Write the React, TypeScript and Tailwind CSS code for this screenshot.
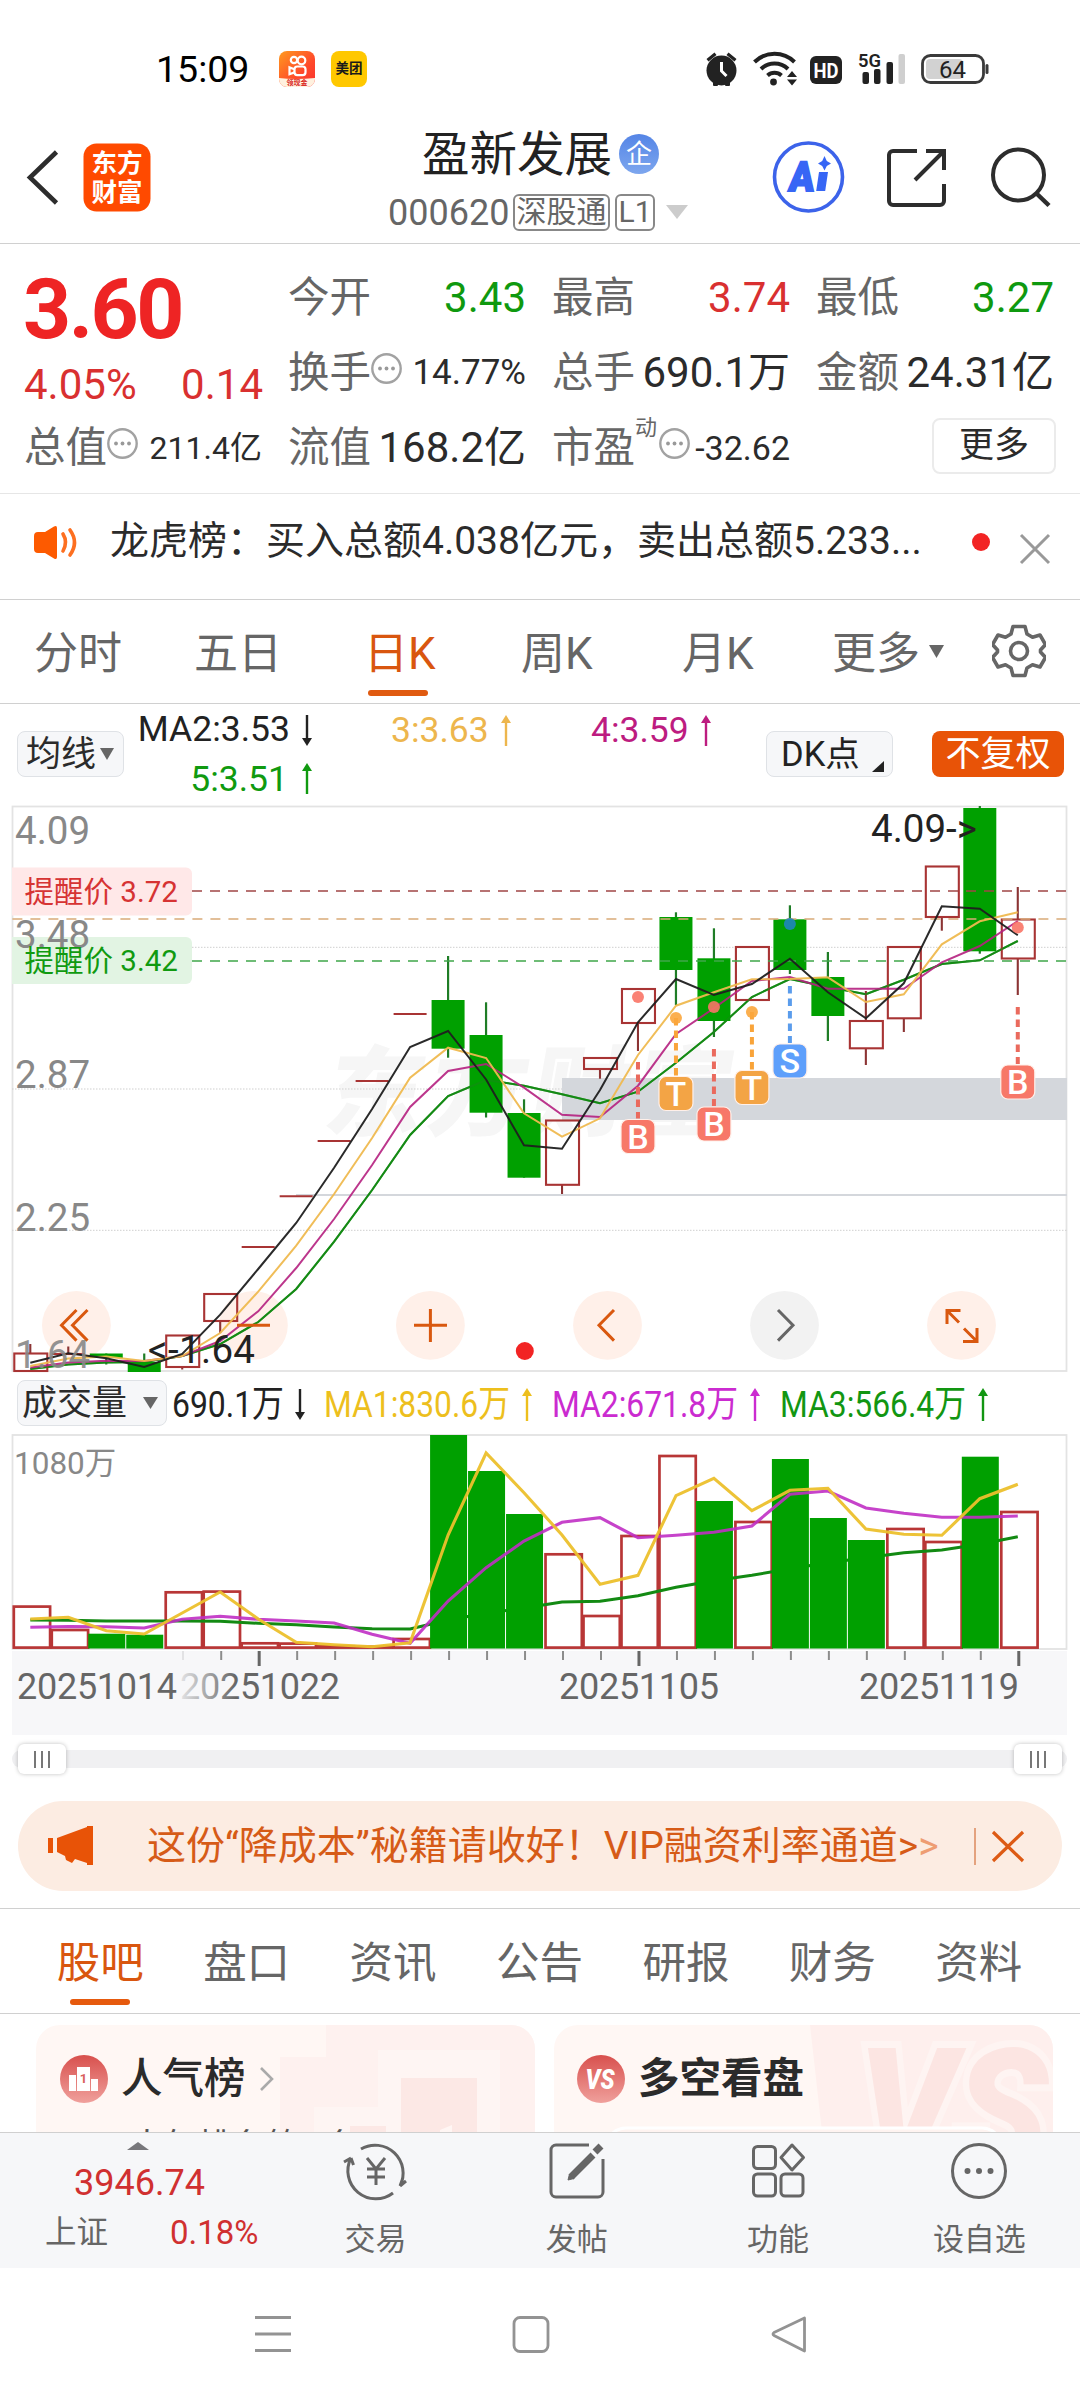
import React from "react";

const RED = "#a83434";
const GREEN = "#00a000";
const X0 = 30.3;
const STEP = 37.98;
const cx = (i: number) => X0 + STEP * i;

type Candle = { up: boolean; t: number; b: number; h?: number; l?: number };

const candles: Candle[] = [
  { up: true, t: 1353.5, b: 1371, h: 1344 },
  { up: true, t: 1354, b: 1354, h: 1346.5 },
  { up: false, t: 1353.5, b: 1358, l: 1364.5 },
  { up: false, t: 1362, b: 1372, h: 1353.5 },
  { up: true, t: 1335.5, b: 1367, l: 1369.5 },
  { up: true, t: 1294, b: 1321, l: 1333 },
  { up: true, t: 1247, b: 1247 },
  { up: true, t: 1196.3, b: 1196.3 },
  { up: true, t: 1141, b: 1141 },
  { up: true, t: 1081, b: 1081 },
  { up: true, t: 1014, b: 1014 },
  { up: false, t: 1000, b: 1048.7, h: 956, l: 1057.7 },
  { up: false, t: 1035, b: 1112.7, h: 1002.3, l: 1117.5 },
  { up: false, t: 1113, b: 1177.7, h: 1099.3 },
  { up: true, t: 1120.5, b: 1184.8, l: 1194 },
  { up: true, t: 1058, b: 1069, l: 1078.7 },
  { up: true, t: 989, b: 1023, l: 1051 },
  { up: false, t: 917, b: 970, h: 912.3, l: 1005 },
  { up: false, t: 958.3, b: 1021, h: 928.3, l: 1037 },
  { up: true, t: 947, b: 1000, },
  { up: false, t: 919.3, b: 970, h: 905.3, l: 974 },
  { up: false, t: 977, b: 1016, h: 952, l: 1041 },
  { up: true, t: 1021, b: 1048.3, h: 991, l: 1065 },
  { up: true, t: 947, b: 1018.3, l: 1032 },
  { up: true, t: 866.5, b: 917, l: 930.7 },
  { up: false, t: 808, b: 951.3, h: 806, l: 953.7 },
  { up: true, t: 919.5, b: 958.5, h: 887, l: 995 },
];

const maBlack = [1362.7, 1353.3, 1358.3, 1367, 1354, 1314.7, 1269, 1223, 1167.7, 1109, 1047, 1031, 1079.5, 1145.3, 1148.7, 1090, 1022.3, 979, 995, 984, 958.7, 992.3, 1018.3, 983.3, 906.3, 908.7, 935.3];
const maYellow = [1366, 1358.5, 1356.5, 1361, 1356, 1333, 1291.7, 1245.7, 1194, 1138, 1077.7, 1047.7, 1058, 1113.3, 1136.7, 1118.3, 1055, 1005.7, 992.3, 979.3, 979, 977.3, 1002, 994.3, 944.3, 921.3, 912.3];
const maPink = [1367.5, 1362.5, 1360.7, 1361, 1356, 1341, 1311.3, 1268, 1219, 1165, 1107, 1071, 1064, 1087.7, 1114.7, 1117, 1085.7, 1034, 1008.3, 981, 977, 988.7, 988.7, 988.7, 962.3, 946, 921];
const maGreen = [1369, 1364.5, 1362.5, 1362, 1356, 1344, 1322, 1289, 1241.7, 1190, 1135, 1096, 1080, 1085.7, 1094.3, 1103.3, 1091.7, 1062.7, 1032, 997, 979, 987, 994.3, 979.7, 964, 960.3, 941];

const vols: [boolean, number][] = [
  [true, 1605.3], [true, 1628.7], [false, 1633.7], [false, 1634.7], [true, 1591], [true, 1590.3], [true, 1642],
  [true, 1642.3], [true, 1645], [true, 1645.4], [true, 1637.7], [false, 1435], [false, 1471], [false, 1514],
  [true, 1553], [true, 1614.7], [true, 1534.7], [true, 1454.7], [false, 1501], [true, 1520.7], [false, 1459],
  [false, 1518], [false, 1540], [true, 1527.7], [true, 1540.7], [false, 1456.7], [true, 1510.7],
];
const vYellow = [1619, 1617.3, 1630.7, 1634, 1613, 1592, 1619, 1642.3, 1644.7, 1646.7, 1642.7, 1535, 1453, 1492.7, 1535, 1584.3, 1575.3, 1495.7, 1478.3, 1510.7, 1490.3, 1488.3, 1529, 1534.3, 1535.3, 1498.7, 1484.3];
const vPink = [1627.3, 1626.5, 1626.7, 1628, 1619.3, 1616.3, 1619.3, 1621, 1623, 1634.3, 1643.3, 1601, 1567.7, 1541, 1522.3, 1517.7, 1537.7, 1535.3, 1532.3, 1526, 1494.3, 1491, 1508, 1513.3, 1517.3, 1517.3, 1516];
const vGreen = [1620, 1620.3, 1621, 1621, 1621, 1621.3, 1623.3, 1624.7, 1627, 1628.7, 1629, 1620, 1613.3, 1608, 1602, 1601.3, 1595.7, 1587.3, 1580.7, 1575.3, 1568.7, 1562.7, 1557.7, 1552.7, 1550, 1544.3, 1536.7];

const pts = (a: number[]) => a.map((y, i) => `${cx(i).toFixed(1)},${y}`).join(" ");

type Marker = { i: number; k: "B" | "T" | "S"; y: number; dot: number; from: number };
const markers: Marker[] = [
  { i: 16, k: "B", y: 1136.5, dot: 997, from: 1062 },
  { i: 17, k: "T", y: 1093.5, dot: 1018, from: 1018 },
  { i: 18, k: "B", y: 1124, dot: 1007, from: 1049 },
  { i: 19, k: "T", y: 1087.5, dot: 1012, from: 1012 },
  { i: 20, k: "S", y: 1061, dot: 924, from: 986 },
  { i: 26, k: "B", y: 1082, dot: 927.5, from: 1007 },
];
const markerColor = { B: "#f77868", T: "#f3a445", S: "#5e9ffb" };
const lineColor = { B: "#ea6a5d", T: "#f9a43a", S: "#5a9cec" };
const dotColor = { B: "#f97466", T: "#fba63c", S: "#1f85bd" };

function Arrow({ color, down = false }: { color: string; down?: boolean }) {
  return (
    <svg width="14" height="32" viewBox="0 0 14 32" className={down ? "rotate-180 shrink-0" : "shrink-0"}>
      <path d="M7 31V4" stroke={color} strokeWidth="2.4" />
      <path d="M7 0l5 8H2z" fill={color} />
    </svg>
  );
}

function More() {
  return (
    <svg width="31" height="31" viewBox="0 0 31 31" className="mb-[8px] shrink-0">
      <circle cx="15.5" cy="15.5" r="14.2" fill="none" stroke="#a2a2a2" strokeWidth="2.4" />
      <circle cx="9" cy="15.5" r="1.9" fill="#999" />
      <circle cx="15.5" cy="15.5" r="1.9" fill="#999" />
      <circle cx="22" cy="15.5" r="1.9" fill="#999" />
    </svg>
  );
}

function StatusBar() {
  return (
    <div className="flex h-[118px] items-center pt-5 pl-[156px] pr-[91px]">
      <span className="w-[123px] pt-[2px] text-[37.500px] leading-none text-black">15:09</span>
      <div className="flex flex-1 gap-4">
        <svg width="36" height="36" viewBox="0 0 36 36">
          <defs>
            <linearGradient id="ks" x1="0" y1="0" x2="1" y2="1">
              <stop offset="0" stopColor="#ff9a1f" />
              <stop offset="0.6" stopColor="#ff4a2a" />
              <stop offset="1" stopColor="#f9302e" />
            </linearGradient>
          </defs>
          <rect width="36" height="36" rx="8" fill="url(#ks)" />
          <path d="M0 27q16 2 36 0v1a8 8 0 0 1-8 8H8a8 8 0 0 1-8-8z" fill="#fff1df" />
          <g fill="none" stroke="#fff" strokeWidth="2.2">
            <circle cx="15" cy="9" r="3.2" />
            <circle cx="22.5" cy="9.5" r="3.8" />
            <rect x="15.5" y="15.5" width="11" height="8.6" rx="2.8" />
            <path d="M15.5 18.2l-5-1.8v6.8l5-1.8" />
          </g>
          <text x="18" y="34" fontSize="7" fontWeight="700" textAnchor="middle" fill="#d9261c">领现金</text>
        </svg>
        <div className="flex size-9 items-center justify-center rounded-lg bg-[#ffc800] text-[13.5px] leading-none font-bold text-[#1a1a1a]">美团</div>
      </div>
      <svg width="283" height="40" viewBox="706 49 283 40" className="shrink-0">
        <g fill="#222">
          <circle cx="721.5" cy="70.5" r="15" />
          <path d="M706.5 59l8-6.5 2 2.4-8 6.5zM736.5 59l-8-6.5-2 2.4 8 6.5z" />
          <rect x="713" y="82" width="5" height="4" rx="1" />
          <rect x="725" y="82" width="5" height="4" rx="1" />
        </g>
        <path d="M721.5 62v9l5 5" fill="none" stroke="#fff" strokeWidth="3" />
        <g fill="none" stroke="#222" strokeWidth="4">
          <path d="M754.5 62a28.5 28.5 0 0 1 40 0" />
          <path d="M761 69a19.5 19.5 0 0 1 27 0" />
          <path d="M767.500 75.500a10.500 10.500 0 0 1 14 0" />
        </g>
        <circle cx="773.5" cy="82" r="3.4" fill="#222" />
        <path d="M787 77l5-6 5 6zM787 79.500l5 6 5-6z" fill="#222" />
        <rect x="810" y="56" width="32" height="28" rx="6" fill="#222" />
        <text x="826" y="77.500" fontSize="21" fontWeight="700" textAnchor="middle" fill="#fff" textLength="25" lengthAdjust="spacingAndGlyphs">HD</text>
        <text x="858" y="66.500" fontSize="19" fontWeight="600" fill="#222" textLength="23" lengthAdjust="spacingAndGlyphs">5G</text>
        <g fill="#222">
          <rect x="862.500" y="72" width="6.500" height="12" rx="2" />
          <rect x="874" y="69" width="6.500" height="15" rx="2" />
          <rect x="886.500" y="62" width="6.500" height="22" rx="2" />
        </g>
        <rect x="898.500" y="54" width="6.500" height="30" rx="2" fill="#cfcfcf" />
        <rect x="922.500" y="55.500" width="61" height="27" rx="8" fill="#fff" stroke="#3a3a3a" strokeWidth="2.800" />
        <rect x="926" y="59" width="37" height="20" rx="4" fill="#d2d2d2" />
        <rect x="985.500" y="64" width="3" height="10" rx="1.500" fill="#3a3a3a" />
        <text x="952.500" y="77.500" fontSize="24" textAnchor="middle" fill="#222">64</text>
      </svg>
    </div>
  );
}

function Header() {
  return (
    <div className="flex h-[126px] border-b border-[#d0d0d0]">
      <svg width="384" height="124" viewBox="0 118 384 124" className="shrink-0">
        <path d="M56.500 152L30 177.500l26.500 25.500" fill="none" stroke="#2d2d2d" strokeWidth="4.600" />
        <rect x="83.500" y="143.500" width="67" height="68" rx="13" fill="#ff4a00" />
        <text x="117" y="172" fontSize="25.500" fontWeight="700" textAnchor="middle" fill="#fff">东方</text>
        <text x="117" y="201" fontSize="25.500" fontWeight="700" textAnchor="middle" fill="#fff">财富</text>
      </svg>
      <div className="flex w-[312px] shrink-0 flex-col pl-[4px] pt-[14px]">
        <div className="flex h-[48px] items-center pl-[34px]">
          <span className="w-[197px] text-[47.500px] leading-none text-[#222]">盈新发展</span>
          <span className="-mt-[4px] flex size-[40px] items-center justify-center rounded-full bg-gradient-to-b from-[#5585e6] to-[#7da6ee] text-[26px] leading-none text-white">企</span>
        </div>
        <div className="mt-[13px] flex items-center text-[#666]">
          <span className="w-[125px] pt-[2px] text-[36px] leading-none">000620</span>
          <span className="flex h-[37px] w-[97px] items-center justify-center rounded-md border-2 border-[#888] text-[30px] leading-none">深股通</span>
          <span className="ml-[5px] flex h-[37px] w-[40px] items-center justify-center rounded-md border-2 border-[#888] text-[30px] leading-none">L1</span>
          <svg width="22" height="14" viewBox="0 0 22 14" className="ml-[11px]"><path d="M0 0h22L11 14z" fill="#ccc" /></svg>
        </div>
      </div>
      <svg width="384" height="124" viewBox="696 118 384 124" className="shrink-0">
        <circle cx="808.500" cy="177" r="34" fill="none" stroke="#3c63ea" strokeWidth="3.600" />
        <text x="0" y="0" fontSize="41" fontWeight="900" fill="#3766f5" stroke="#3766f5" strokeWidth="2" textLength="25" lengthAdjust="spacingAndGlyphs" transform="translate(788 191) skewX(-6)">A</text>
        <path d="M819 172h9l-2.800 19h-9z" fill="#3766f5" />
        <path d="M824.500 156l2.300 5 4.200 2.600-4.200 2.400-2.300 4.500-2.300-4.500-4.200-2.400 4.200-2.600z" fill="#3766f5" />
        <g fill="none" stroke="#2d2d2d" strokeWidth="4">
          <path d="M917 151h-24a4 4 0 0 0-4 4v46a4 4 0 0 0 4 4h47a4 4 0 0 0 4-4v-17" />
          <path d="M926 151h18v19M944 151l-29 29" />
          <circle cx="1018.500" cy="175" r="25.500" />
          <path d="M1036 193l13 12.500" strokeWidth="4.500" />
        </g>
      </svg>
    </div>
  );
}

function Stat({ label, value, tone = "text-[#2b2b2b]", size = "text-[42px]", more = false }: { label: React.ReactNode; value: string; tone?: string; size?: string; more?: boolean }) {
  return (
    <div className="flex h-[75px] w-[238px] items-center justify-between leading-none whitespace-nowrap">
      <span className="flex items-center text-[41.500px] text-[#666]">{label}{more && <More />}</span>
      <span className={`${size} ${tone}`}>{value}</span>
    </div>
  );
}

function Quote() {
  return (
    <div className="flex h-[250px] gap-[26px] border-b border-[#e6e6e6] pl-[25px]">
      <div className="-ml-[1px] flex w-[239px] flex-col">
        <div className="-ml-[1px] flex h-[114px] items-end pb-[6px] text-[84px] leading-none font-bold tracking-[-2.5px] text-[#ee2424]">3.60</div>
        <div className="flex h-[54px] items-center justify-between text-[42px] leading-none text-[#d93030]"><span>4.05%</span><span>0.14</span></div>
        <div className="-mt-[2px]"><Stat label="总值" more value="211.4亿" size="text-[32px]" /></div>
      </div>
      <div className="-ml-[1px] grid h-[239px] grid-cols-3 content-start gap-x-[26px] pt-[16px]">
        <Stat label="今开" value="3.43" tone="text-[#0f990f]" />
        <Stat label="最高" value="3.74" tone="text-[#d93030]" />
        <Stat label="最低" value="3.27" tone="text-[#0f990f]" />
        <Stat label="换手" more value="14.77%" size="text-[35px]" />
        <Stat label="总手" value="690.1万" />
        <Stat label="金额" value="24.31亿" />
        <Stat label="流值" value="168.2亿" />
        <Stat label={<>市盈<span className="-mt-[40px] mr-[2px] text-[22px]">动</span></>} more value="-32.62" size="text-[34px]" />
        <div className="flex h-[75px] items-center justify-end">
          <span className="-mr-[2px] -mt-[4px] flex h-[56px] w-[124px] items-center justify-center rounded-lg border-2 border-[#ebebeb] text-[35px] leading-none text-[#2b2b2b]">更多</span>
        </div>
      </div>
    </div>
  );
}

function News() {
  return (
    <div className="flex h-[106px] items-center border-b border-[#d0d0d0] pb-[10px]">
      <svg width="110" height="50" viewBox="0 515 110 50" className="shrink-0">
        <path d="M34 534a4 4 0 0 1 4-4h7l9-5.500q3-1.500 3 1.500v29q0 3-3 1.500l-9-5.500h-7a4 4 0 0 1-4-4z" fill="#fd5a00" />
        <path d="M63 532q5 8 0 17M70 528q9 12.500 0 25" fill="none" stroke="#fd6f20" strokeWidth="3.600" strokeLinecap="round" />
      </svg>
      <span className="flex-1 text-[39px] leading-none whitespace-nowrap text-[#2b2b2b]">龙虎榜：买入总额4.038亿元，卖出总额5.233...</span>
      <span className="size-[18px] rounded-full bg-[#f22424]" />
      <svg width="90" height="50" viewBox="990 515 90 50" className="shrink-0">
        <path d="M1021 533l28 28M1049 533l-28 28" stroke="#999" strokeWidth="3" />
      </svg>
    </div>
  );
}

function PeriodTabs() {
  return (
    <div className="flex h-[104px] border-b border-[#d0d0d0] pl-[34px] text-[44px] leading-none whitespace-nowrap text-[#666]">
      <span className="w-[160px] pt-[32px]">分时</span>
      <span className="w-[170px] pt-[32px]">五日</span>
      <span className="flex w-[157px] flex-col pt-[32px] text-[#d9560f]">
        日K
        <span className="mt-[14px] ml-[4px] h-[6px] w-[60px] rounded-full bg-[#e05a10]" />
      </span>
      <span className="w-[161px] pt-[32px]">周K</span>
      <span className="w-[150px] pt-[32px]">月K</span>
      <span className="flex w-[160px] pt-[32px]">更多<svg width="15" height="13" viewBox="0 0 15 13" className="mt-[13px] ml-[9px]"><path d="M0 0h15L7.500 13z" fill="#666" /></svg></span>
      <svg width="54" height="54" viewBox="-27 -27 54 54" className="mt-[24px]">
        <path d="M-6 -24.500h12l2 7.500 5.500 3.200 7.500-2.200 5.500 9.500-5 5.500v2l5 5.500-5.500 9.500-7.500-2.200-5.500 3.200-2 7.500h-12l-2-7.500-5.500-3.200-7.500 2.200-5.500-9.500 5-5.500v-2l-5-5.500 5.500-9.500 7.500 2.200 5.500-3.200z" fill="none" stroke="#666" strokeWidth="3.600" strokeLinejoin="round" />
        <circle r="8.500" fill="none" stroke="#666" strokeWidth="3.600" />
      </svg>
    </div>
  );
}

function MaLegend() {
  return (
    <div className="flex h-[96px] items-center pl-[17px] text-[35.500px] leading-none whitespace-nowrap">
      <div className="mt-[4px] flex h-[46px] w-[107px] items-center gap-[4px] rounded-lg border border-[#dfe2e6] bg-[#f6f7f9] pl-[8px] text-[35px] text-[#2b2b2b]">
        均线
        <svg width="14" height="12" viewBox="0 0 14 12"><path d="M0 0h14L7 12z" fill="#666" /></svg>
      </div>
      <div className="mt-[5px] ml-[12px] flex w-[178px] flex-col gap-[14px]">
        <div className="flex items-center justify-end gap-[10px] text-[#222]">MA2:3.53<Arrow color="#222" down /></div>
        <div className="flex items-center justify-end gap-[12px] text-[#109a10]">5:3.51<Arrow color="#109a10" /></div>
      </div>
      <div className="mb-[43px] ml-[77px] flex w-[122px] items-center justify-between text-[#edb64d]">3:3.63<Arrow color="#edb64d" /></div>
      <div className="mb-[43px] ml-[78px] flex w-[122px] items-center justify-between text-[#bd1c80]">4:3.59<Arrow color="#bd1c80" /></div>
      <div className="mt-[4px] ml-[53px] flex h-[46px] w-[127px] items-center rounded-lg border border-[#dfe2e6] bg-[#f6f7f9] pl-[14px] text-[34.500px] text-[#222]">
        DK点
        <svg width="12" height="11" viewBox="0 0 12 11" className="mt-[24px] ml-[12px]"><path d="M12 0v11H0z" fill="#222" /></svg>
      </div>
      <div className="mt-[4px] ml-[39px] flex h-[46px] w-[132px] items-center justify-center rounded-lg bg-[#e85307] text-[35px] text-white">不复权</div>
    </div>
  );
}

function PriceChart() {
  const rest = candles.map((c, i) => ({ c, i }));
  return (
    <svg width="1080" height="576" viewBox="0 800 1080 576" className="block">
      <rect x="12.500" y="806.500" width="1054" height="564.500" fill="none" stroke="#e3e3e3" strokeWidth="1.800" />
      <text x="324" y="1128" fontSize="98" fontWeight="900" fill="#f6f6f6" textLength="406" transform="translate(196 0) skewX(-10)">东方财富</text>
      {[947.300, 1089, 1230.300].map((y) => (
        <line key={y} x1="12" x2="1067" y1={y} y2={y} stroke="#cfcfcf" strokeDasharray="1.500 1.500" />
      ))}
      <rect x="562" y="1078" width="505" height="42" fill="#d4d7dc" />
      <line x1="296" x2="1067" y1="1195" y2="1195" stroke="#d4d7dc" strokeWidth="2" />
      {[76.400, 253.400, 430.400, 607.500, 961.500].map((x) => (
        <circle key={x} cx={x} cy="1325.300" r="34.400" fill="#fff0e9" />
      ))}
      <circle cx="784.500" cy="1325.300" r="34.400" fill="#f2f2f2" />
      <g fill="none" stroke="#d9580f" strokeWidth="3">
        <path d="M76.500 1310l-15 15.300 15 15.300M87.500 1310l-15 15.300 15 15.300" />
        <path d="M414 1325.300h33M430.400 1309v33" />
        <path d="M614 1310l-15 15.300 15 15.300" />
        <path d="M947 1324v-13.500h13.500M947 1310.500l12 12M977 1328v13.500h-14M977 1341.500l-13-13" />
      </g>
      <path d="M778 1310l15 15.300-15 15.300" fill="none" stroke="#666" strokeWidth="3" />

      <path d="M12 867.500h174a6 6 0 0 1 6 6v36a6 6 0 0 1-6 6H12z" fill="#ffe8e8" />
      <path d="M12 937h174a6 6 0 0 1 6 6v35a6 6 0 0 1-6 6H12z" fill="#e2f4e3" />
      <g fontSize="38.500" fill="#888">
        <text x="15" y="844">4.09</text>
        <text x="15" y="948">3.48</text>
        <text x="15" y="1088">2.87</text>
        <text x="15" y="1231">2.25</text>
      </g>
      <text x="24.500" y="902" fontSize="29.500" fill="#d63333">提醒价 3.72</text>
      <text x="24.500" y="971" fontSize="29.500" fill="#109a10">提醒价 3.42</text>

      <polyline points={pts(maGreen)} fill="none" stroke="#148a14" strokeWidth="2" />
      {rest.map(({ c, i }) => {
        const x = cx(i);
        if (!c.up) {
          return (
            <g key={i}>
              <line x1={x} x2={x} y1={c.h ?? c.t} y2={c.l ?? c.b} stroke="#1f7d26" strokeWidth="2.200" />
              <rect x={x - 16.500} y={c.t} width="33" height={c.b - c.t} fill={GREEN} />
            </g>
          );
        }
        return (
          <g key={i} stroke={RED} strokeWidth="2.100" fill="none">
            {c.h !== undefined && <line x1={x} x2={x} y1={c.h} y2={c.t} stroke="#8c3434" />}
            {c.l !== undefined && <line x1={x} x2={x} y1={c.b} y2={c.l} stroke="#8c3434" />}
            {c.t === c.b ? <line x1={x - 16.500} x2={x + 16.500} y1={c.t} y2={c.t} /> : <rect x={x - 16} y={c.t} width="33" height={c.b - c.t} />}
          </g>
        );
      })}
      <line x1="192" x2="1067" y1="891" y2="891" stroke="#a04545" strokeWidth="1.300" strokeDasharray="10 8" />
      <line x1="12.400" x2="1067" y1="919" y2="919" stroke="#d9ab78" strokeWidth="1.500" strokeDasharray="10 8" />
      <line x1="192" x2="1067" y1="961" y2="961" stroke="#3fa64a" strokeWidth="1.400" strokeDasharray="10 8" />
      <polyline points={pts(maGreen)} fill="none" stroke="#148a14" strokeWidth="2" opacity="0.6" />
      <polyline points={pts(maPink)} fill="none" stroke="#b5207f" strokeWidth="2" opacity="0.9" />
      <polyline points={pts(maYellow)} fill="none" stroke="#efb94f" strokeWidth="2" opacity="0.95" />
      <polyline points={pts(maBlack)} fill="none" stroke="#1f1f1f" strokeWidth="2" opacity="0.95" />
      <path d="M237 1325.300h33" stroke="#d9580f" strokeWidth="3" />
      <text x="15" y="1368" fontSize="38.500" fill="#888" opacity="0.9">1.64</text>
      <text x="148" y="1363" fontSize="38.500" fill="#222" textLength="107">&lt;-1.64</text>
      <text x="871" y="842" fontSize="38.500" fill="#222">4.09-&gt;</text>
      <circle cx="524.800" cy="1351" r="9" fill="#f22424" />

      {markers.map((m) => {
        const x = cx(m.i);
        return (
          <g key={m.i}>
            <line x1={x} x2={x} y1={m.from} y2={m.y - 18} stroke={lineColor[m.k]} strokeWidth="4" strokeDasharray="7.500 5" />
            <circle cx={x} cy={m.dot} r="6" fill={dotColor[m.k]} opacity="0.9" />
            <rect x={x - 17} y={m.y - 17} width="34" height="34" rx="7" fill={markerColor[m.k]} stroke="#fff0ea" strokeWidth="1.200" />
            <text x={x} y={m.y + 12} fontSize="34" fontWeight="500" textAnchor="middle" fill="#fff">{m.k}</text>
          </g>
        );
      })}
    </svg>
  );
}

function CondensedValue({ text, color, down = false, box }: { text: string; color: string; down?: boolean; box: string }) {
  return (
    <svg height="50" className={`${box} shrink-0 overflow-visible`}>
      <text x="0" y="39" fontSize="37" fill={color} textLength={down ? 112 : 186} lengthAdjust="spacingAndGlyphs">{text}</text>
      {down ? (
        <g><path d="M128 11v27" stroke={color} strokeWidth="2.400" /><path d="M128 42l5-8h-10z" fill={color} /></g>
      ) : (
        <g><path d="M203 43V15" stroke={color} strokeWidth="2.400" /><path d="M203 10l5 8h-10z" fill={color} /></g>
      )}
    </svg>
  );
}

function VolumeLegend() {
  return (
    <div className="flex h-[54px] items-center pl-[17px] text-[35px] leading-none whitespace-nowrap">
      <div className="flex h-[46px] w-[150px] shrink-0 items-center justify-between rounded-lg border border-[#dfe2e6] bg-[#f6f7f9] pr-[8px] pl-[4px] text-[#2b2b2b]">
        成交量
        <svg width="15" height="12" viewBox="0 0 15 12"><path d="M0 0h15L7.500 12z" fill="#666" /></svg>
      </div>
      <CondensedValue text="690.1万" color="#222" down box="ml-[5px] w-[152px]" />
      <CondensedValue text="MA1:830.6万" color="#edbf1d" box="w-[228px]" />
      <CondensedValue text="MA2:671.8万" color="#cb2bd0" box="w-[228px]" />
      <CondensedValue text="MA3:566.4万" color="#129612" box="w-[228px]" />
    </div>
  );
}

function VolumeChart() {
  const left = (i: number) => 12.300 + STEP * i;
  return (
    <svg width="1080" height="305" viewBox="0 1430 1080 305" className="block">
      <defs>
        <linearGradient id="fade" gradientUnits="userSpaceOnUse" x1="181" x2="236" y1="0" y2="0">
          <stop offset="0" stopColor="#666" stopOpacity="0.15" />
          <stop offset="1" stopColor="#666" />
        </linearGradient>
      </defs>
      <rect x="12" y="1651" width="1055" height="84" fill="#f7f7f9" />
      <rect x="12.500" y="1435" width="1054" height="214" fill="none" stroke="#e3e3e3" strokeWidth="1.800" />
      <text x="14" y="1474" fontSize="31.500" fill="#888">1080万</text>
      {vols.map(([up, t], i) => up && (
        <rect key={i} x={left(i) + 1.500} y={t + 1.300} width="36.300" height={Math.max(1647.300 - t - 1, 0.500)} fill="none" stroke="#b83636" strokeWidth="2.700" />
      ))}
      <polyline points={pts(vGreen)} fill="none" stroke="#138a13" strokeWidth="3" />
      {vols.map(([up, t], i) => !up && (
        <rect key={i} x={left(i)} y={t} width="37" height={1648.500 - t} fill={GREEN} />
      ))}
      <polyline points={pts(vPink)} fill="none" stroke="#c02fc4" strokeWidth="3.100" opacity="0.9" />
      <polyline points={pts(vYellow)} fill="none" stroke="#ecc02c" strokeWidth="3.100" opacity="0.95" />
      {Array.from({ length: 22 }, (_, k) => k + 5).map((i) => {
        const major = i === 6 || i === 16 || i === 26;
        return <line key={i} x1={cx(i) + 1} x2={cx(i) + 1} y1="1651" y2={major ? 1666 : 1660} stroke={major ? "#666" : "#8c8c8c"} strokeWidth={major ? 3 : 2} />;
      })}
      <line x1="183" x2="183" y1="1651" y2="1660" stroke="#e2e2e4" strokeWidth="2" />
      <g fontSize="36" fill="#666">
        <text x="17" y="1699" textLength="160">20251014</text>
        <text x="180" y="1699" textLength="160" fill="url(#fade)">20251022</text>
        <text x="559" y="1699" textLength="160">20251105</text>
        <text x="859" y="1699" textLength="160">20251119</text>
      </g>
    </svg>
  );
}

function Handle() {
  return (
    <span className="flex h-[30px] w-[48px] items-center justify-center gap-[5px] rounded-md bg-white shadow-[0_0_4px_rgba(0,0,0,0.25)]">
      <i className="h-[17px] w-[2px] bg-[#777]" /><i className="h-[17px] w-[2px] bg-[#777]" /><i className="h-[17px] w-[2px] bg-[#777]" />
    </span>
  );
}

function Banner() {
  return (
    <div className="mx-[18px] flex h-[90px] items-center rounded-full bg-[#fcece2]">
      <svg width="129" height="50" viewBox="18 1821 129 50" className="shrink-0">
        <g fill="#e85307">
          <rect x="48" y="1838" width="5" height="15" />
          <path d="M57 1838l30-11v-1h6v39h-6v-2l-12-4-3 4-6-3-1-4-8-4z" />
        </g>
      </svg>
      <span className="w-[823px] text-[39px] leading-none whitespace-nowrap text-[#d65b17]">
        这份“降成本”秘籍请收好！VIP融资利率通道&gt;<span className="text-[#ee9d72]">&gt;</span>
      </span>
      <svg width="60" height="50" viewBox="970 1820 60 50" className="shrink-0">
        <path d="M975 1827v37" stroke="#dd8a5c" strokeWidth="1.500" />
        <path d="M993 1831l30 29M1023 1831l-30 29" stroke="#dd5a14" strokeWidth="3.200" />
      </svg>
    </div>
  );
}

function SectionTabs() {
  return (
    <div className="mt-[17px] grid h-[106px] grid-cols-7 border-y border-[#d0d0d0] pr-[28px] pl-[27px] text-center text-[43.500px] leading-none text-[#666]">
      {["股吧", "盘口", "资讯", "公告", "研报", "财务", "资料"].map((t, i) => (
        <span key={t} className={i === 0 ? "flex flex-col items-center pt-[33px] text-[#d9560f]" : "pt-[33px]"}>
          {t}
          {i === 0 && <span className="mt-[13px] h-[6px] w-[60px] rounded-full bg-[#e65a0e]" />}
        </span>
      ))}
    </div>
  );
}

function Cards() {
  return (
    <div className="flex h-[118px] gap-[19px] overflow-hidden px-[36px] pt-[11px]">
      <div className="relative h-[180px] w-[499px] shrink-0 overflow-hidden rounded-[24px] bg-[#fff7f4]">
        <svg width="499" height="107" viewBox="36 2025 499 107" className="absolute top-0 left-0">
          <path d="M326 2025h209v107H280v-75h46z" fill="#fef1ef" />
          <path d="M314 2132v-25h64v-57h122v82z" fill="#fef5f3" />
          <path d="M401 2078h76v54h-76zM350 2126h36v6h-36z" fill="#fce8e5" />
          <path d="M440 2130l12-5v7h-12z" fill="#fff6f4" />
        </svg>
        <div className="relative flex items-center pt-[30px] pl-[24px]">
          <svg width="48" height="48" viewBox="0 0 48 48">
            <defs><linearGradient id="ic" x1="0" y1="0" x2="0" y2="1"><stop offset="0" stopColor="#d8504d" /><stop offset="1" stopColor="#f0a09c" /></linearGradient></defs>
            <circle cx="24" cy="24" r="24" fill="url(#ic)" />
            <path d="M9 20h7v16H9zM17 12h13v24H17zM31 24h7v12h-7z" fill="#fff" />
            <text x="23.500" y="28" fontSize="13" fontWeight="700" textAnchor="middle" fill="#d9605c">1</text>
          </svg>
          <span className="ml-[13px] text-[41.500px] leading-none font-medium text-[#2b2b2b]">人气榜</span>
          <svg width="16" height="24" viewBox="0 0 16 24" className="ml-[13px]"><path d="M2 1l11 11L2 23" fill="none" stroke="#aaa" strokeWidth="2.600" /></svg>
        </div>
        <div className="relative mt-[26px] ml-[94px] text-[34px] leading-none text-[#555]">人气排名第&nbsp;&nbsp;&nbsp;名</div>
      </div>
      <div className="relative h-[180px] w-[499px] shrink-0 overflow-hidden rounded-[24px] bg-[#fff7f4]">
        <svg width="499" height="107" viewBox="554 2025 499 107" className="absolute top-0 left-0">
          <path d="M810 2025h243v107H822z" fill="#feefed" />
          <text x="858" y="2168" fontSize="168" fontWeight="900" fontStyle="italic" fill="#fce5e2" stroke="#fef4f2" strokeWidth="14" paintOrder="stroke" textLength="190" lengthAdjust="spacingAndGlyphs">VS</text>
          <rect x="606" y="2128" width="396" height="40" rx="20" fill="#fff4f1" stroke="#fff" strokeWidth="3" />
        </svg>
        <div className="relative flex items-center pt-[30px] pl-[23px]">
          <svg width="48" height="48" viewBox="0 0 48 48">
            <circle cx="24" cy="24" r="24" fill="url(#ic)" />
            <text x="23" y="34" fontSize="28" fontWeight="900" fontStyle="italic" textAnchor="middle" fill="#fff" textLength="29" lengthAdjust="spacingAndGlyphs">VS</text>
          </svg>
          <span className="ml-[13px] text-[41.500px] leading-none font-bold text-[#2b2b2b]">多空看盘</span>
        </div>
      </div>
    </div>
  );
}

function BarItem({ label, children }: { label: string; children: React.ReactNode }) {
  return (
    <div className="flex w-[201.300px] flex-col items-center text-[31px] leading-none text-[#666]">
      <svg width="68" height="68" viewBox="-34 -34 68 68" className="mt-[4px]" fill="none" stroke="#666" strokeWidth="3">{children}</svg>
      <span className="mt-[19px]">{label}</span>
    </div>
  );
}

function BottomBar() {
  return (
    <div className="flex h-[136px] border-t border-[#d0d0d0] bg-[#f6f7f9]">
      <div className="w-[275px] leading-none text-[#d03030]">
        <svg width="22" height="8" viewBox="0 0 22 8" className="mt-[9px] ml-[127px]"><path d="M0 8h22L11 0z" fill="#77777b" /></svg>
        <div className="mt-[15px] ml-[74px] text-[36px]">3946.74</div>
        <div className="mt-[15px] flex items-center text-[33px]"><span className="ml-[45px] w-[125px] text-[31.500px] text-[#666]">上证</span>0.18%</div>
      </div>
      <BarItem label="交易">
        <path d="M-15 -22a28 28 0 0 1 39 37M24 15l2.500-7M24 15l6-5" />
        <path d="M17 22a28 28 0 0 1-42-35M-25 -13l-7 4M-25 -13l2.500 7" />
        <path d="M-9 -13l9 11 9-11M0 -2v16M-9 -2h18M-9 6h18" />
      </BarItem>
      <BarItem label="发帖">
        <path d="M12 -26h-33a5 5 0 0 0-5 5v42a5 5 0 0 0 5 5h42a5 5 0 0 0 5-5v-33" />
        <path d="M24 -25l-6 6M16 -16l-22 22" strokeWidth="7" />
        <path d="M-9 9l1.500-6 4.500 4.500z" fill="#666" strokeWidth="1" />
      </BarItem>
      <BarItem label="功能">
        <rect x="-24.500" y="-24.500" width="22" height="22" rx="4" />
        <rect x="-24.500" y="3" width="22" height="22" rx="4" />
        <rect x="3" y="3" width="22" height="22" rx="4" />
        <path d="M14 -26l11.500 12.500-11.500 12.500-11-12.500z" strokeLinejoin="round" />
      </BarItem>
      <BarItem label="设自选">
        <circle r="26.500" />
        <g fill="#666" stroke="none"><circle cx="-11.500" r="3" /><circle r="3" /><circle cx="11.500" r="3" /></g>
      </BarItem>
    </div>
  );
}

function SystemNav() {
  return (
    <div className="flex h-[132px] pt-[45px] pl-[253px]">
      {[
        <path key="m" d="M-18 -16.500h36M-18 0h36M-18 16.500h36" />,
        <rect key="s" x="-17" y="-16.500" width="34" height="34" rx="6" />,
        <path key="b" d="M15.500 -16v33L-15 1.500q-2-1.500 0-3z" strokeLinejoin="round" />,
      ].map((shape, i) => (
        <svg key={i} width="258" height="42" viewBox="-20 -21 258 42" fill="none" stroke="#939393" strokeWidth="2.800">{shape}</svg>
      ))}
    </div>
  );
}

export default function App() {
  return (
    <div className="flex h-[2400px] w-[1080px] flex-col overflow-hidden bg-white font-[Roboto,'Noto_Sans_CJK_SC',sans-serif]">
      <StatusBar />
      <Header />
      <Quote />
      <News />
      <PeriodTabs />
      <MaLegend />
      <PriceChart />
      <VolumeLegend />
      <VolumeChart />
      <div className="flex h-[66px] items-start px-[12px] pt-[9px]">
        <div className="flex h-[30px] w-[1055px] items-center">
          <div className="flex h-[18px] w-full items-center justify-between rounded-full bg-[#f0f0f2] pr-[5px] pl-[6px]">
            <Handle />
            <Handle />
          </div>
        </div>
      </div>
      <Banner />
      <SectionTabs />
      <Cards />
      <BottomBar />
      <SystemNav />
    </div>
  );
}
